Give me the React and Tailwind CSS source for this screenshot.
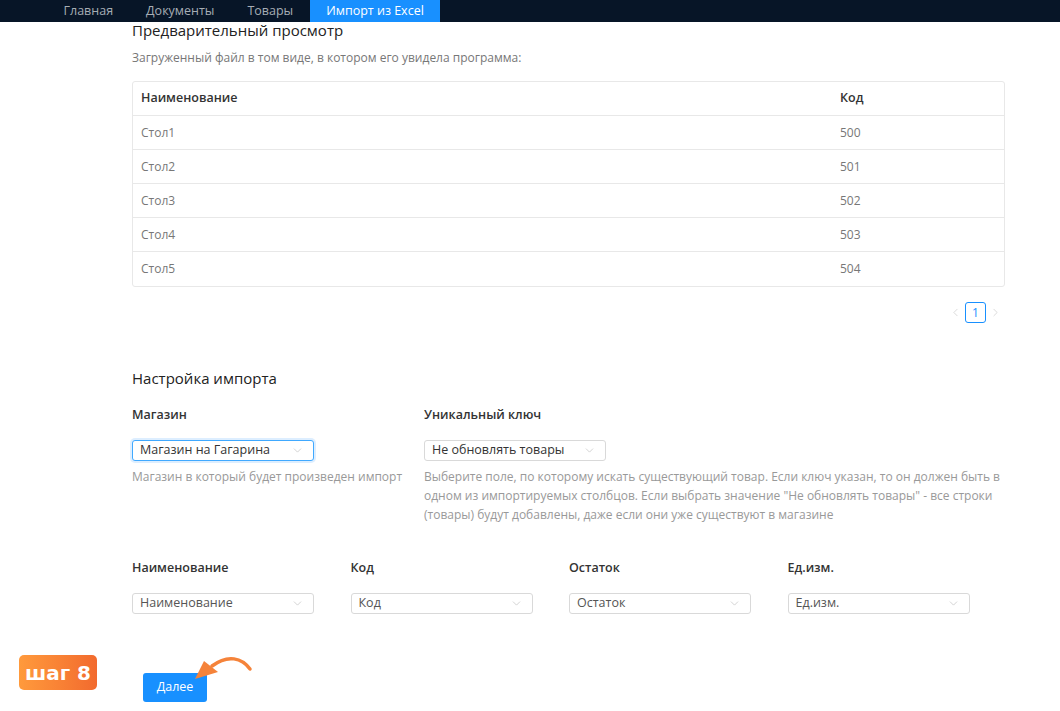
import { ChevronDown, ChevronLeft, ChevronRight } from 'lucide-react';

const NAV = ['Главная', 'Документы', 'Товары', 'Импорт из Excel'];

const ROWS = [
  ['Стол1', '500'],
  ['Стол2', '501'],
  ['Стол3', '502'],
  ['Стол4', '503'],
  ['Стол5', '504'],
];

const COLUMNS = ['Наименование', 'Код', 'Остаток', 'Ед.изм.'];

const Select = ({ value, focused = false, dark = false, width = 'w-[182px]' }) => (
  <div
    className={`flex h-[21px] ${width} items-center justify-between rounded-[3px] border bg-white pl-[7px] pr-[9px] ${
      focused ? 'border-[#40a9ff] shadow-[0_0_0_2px_rgba(24,144,255,0.15)]' : 'border-[#d9d9d9]'
    }`}
  >
    <span className={`text-[12.5px] leading-none ${dark ? 'text-[#333]' : 'text-[#555]'}`}>{value}</span>
    <ChevronDown size={13} strokeWidth={1.2} className="text-[#bbb]" />
  </div>
);

export default function App() {
  return (
    <div className="relative h-[711px] w-[1060px] overflow-hidden bg-white font-['Open_Sans',sans-serif] text-[#222]">
      <nav className="flex h-[22px] items-stretch bg-[#071527] pl-[47px]">
        {NAV.map((item, i) => {
          const active = i === NAV.length - 1;
          return (
            <div
              key={item}
              className={`flex items-center px-[16.5px] text-[12.5px] ${
                active ? 'bg-[#1890ff] text-white' : 'text-[#a6adb4]'
              }`}
            >
              {item}
            </div>
          );
        })}
      </nav>

      <main className="pl-[132px] pr-[55px]">
        <h2 className="-mt-[2px] text-[15px] leading-[20px] font-medium text-[#222]">Предварительный просмотр</h2>
        <p className="mt-[9px] text-[12px] text-[#777]">Загруженный файл в том виде, в котором его увидела программа:</p>

        <div className="mt-[14px] overflow-hidden rounded-[3px] border border-[#e8e8e8]">
          <div className="flex h-[34px] items-center border-b border-[#e8e8e8] text-[12.5px] font-semibold text-[#333]">
            <div className="w-[707px] pl-[8px]">Наименование</div>
            <div>Код</div>
          </div>
          {ROWS.map(([name, code], i) => (
            <div
              key={name}
              className={`flex h-[34px] items-center text-[12px] text-[#777] ${
                i < ROWS.length - 1 ? 'border-b border-[#e8e8e8]' : ''
              }`}
            >
              <div className="w-[707px] pl-[8px]">{name}</div>
              <div>{code}</div>
            </div>
          ))}
        </div>

        <div className="mt-[15px] flex items-center justify-end gap-[3px] pr-[3px]">
          <ChevronLeft size={13} strokeWidth={1.3} className="text-[#ccc]" />
          <div className="flex h-[21px] w-[21px] items-center justify-center rounded-[3px] border border-[#1890ff] text-[12px] text-[#1890ff]">
            1
          </div>
          <ChevronRight size={13} strokeWidth={1.3} className="text-[#ccc]" />
        </div>

        <h2 className="mt-[45px] text-[15px] leading-[20px] font-medium text-[#222]">Настройка импорта</h2>

        <div className="mt-[18px] flex gap-[110px]">
          <div className="w-[182px] shrink-0">
            <div className="text-[12.5px] font-semibold text-[#333]">Магазин</div>
            <div className="mt-[15px]">
              <Select value="Магазин на Гагарина" focused dark />
            </div>
            <p className="mt-[6px] w-[290px] text-[12px] leading-[19px] text-[#999]">Магазин в который будет произведен импорт</p>
          </div>
          <div className="flex-1">
            <div className="text-[12.5px] font-semibold text-[#333]">Уникальный ключ</div>
            <div className="mt-[15px]">
              <Select value="Не обновлять товары" dark />
            </div>
            <p className="mt-[6px] max-w-[590px] text-[12px] leading-[19px] text-[#999]">
              Выберите поле, по которому искать существующий товар. Если ключ указан, то он должен быть в одном из
              импортируемых столбцов. Если выбрать значение "Не обновлять товары" - все строки (товары) будут добавлены,
              даже если они уже существуют в магазине
            </p>
          </div>
        </div>

        <div className="mt-[35px] flex gap-[36.5px]">
          {COLUMNS.map((col) => (
            <div key={col} className="w-[182px]">
              <div className="text-[12.5px] font-semibold text-[#333]">{col}</div>
              <div className="mt-[15px]">
                <Select value={col} />
              </div>
            </div>
          ))}
        </div>
      </main>

      <button
        type="button"
        className="absolute left-[143px] top-[673px] flex h-[29px] w-[64px] items-center justify-center rounded-[3px] bg-[#1890ff] text-[12.5px] text-white"
      >
        Далее
      </button>

      <div className="absolute left-[19px] top-[655px] flex h-[35px] w-[78px] items-center justify-center rounded-[5px] bg-gradient-to-r from-[#ff9a3c] to-[#f26a2e] font-['DejaVu_Sans',sans-serif] text-[20px] font-bold text-white">
        шаг 8
      </div>

      <svg className="absolute left-[190px] top-[650px]" width="70" height="36" viewBox="0 0 70 36" fill="none">
        <path d="M60 19 C52 8 38 4 22 16" stroke="#f5833a" strokeWidth="3.5" strokeLinecap="round" fill="none" />
        <path d="M5 29 L14 11 L28 22 Z" fill="#f5833a" />
      </svg>
    </div>
  );
}
